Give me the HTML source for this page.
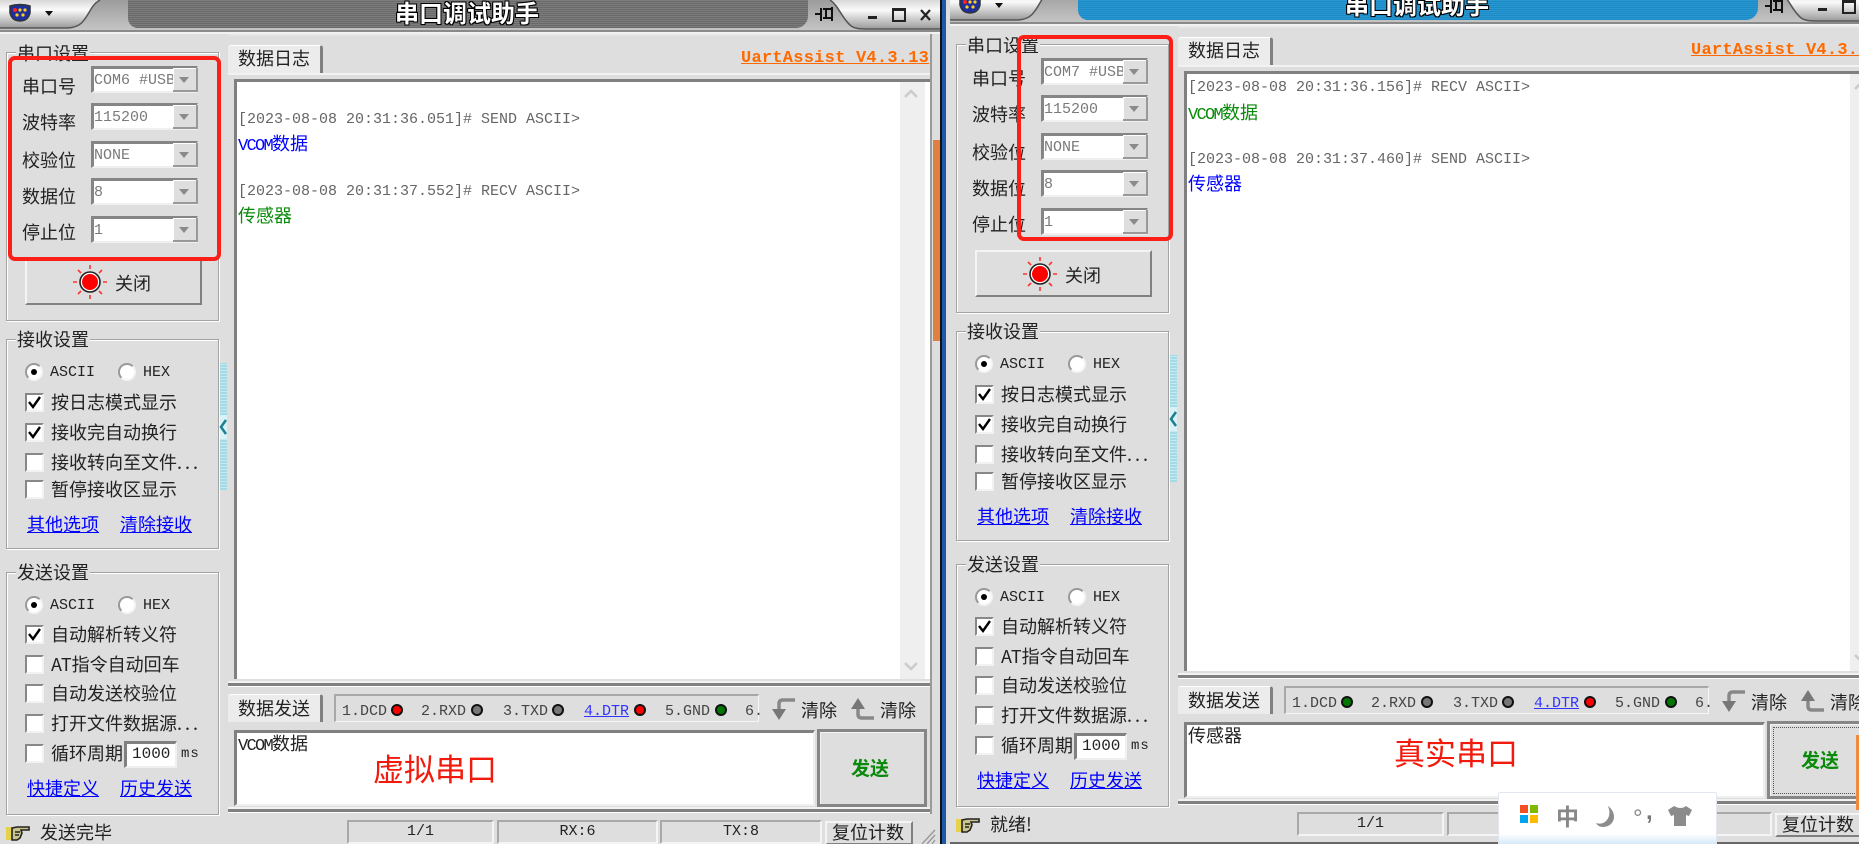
<!DOCTYPE html>
<html lang="zh">
<head>
<meta charset="utf-8">
<title>串口调试助手</title>
<style>
html,body{margin:0;padding:0;width:1859px;height:844px;overflow:hidden;background:#dedede}
#page{position:absolute;left:0;top:0;width:1859px;height:844px;overflow:hidden;filter:blur(.35px)}
.w{position:absolute;width:950px;height:852px;background:#dedede;overflow:hidden;font-family:"Liberation Mono","Noto Sans CJK SC",monospace;color:#222}
.w div,.w svg,.w a{position:absolute}
.t{white-space:nowrap;line-height:20px;font-size:18px;font-family:"Noto Sans CJK SC",sans-serif}
.t b{font-weight:normal;letter-spacing:3px}
.m{white-space:nowrap;line-height:20px;font-size:15px;font-family:"Liberation Mono","Noto Sans CJK SC",monospace}
.v{font-size:17px;letter-spacing:-1.7px}
.l{white-space:nowrap;line-height:20px;font-size:18px;font-family:"Noto Sans CJK SC",sans-serif;color:#00f;text-decoration:underline}
.strip{left:128px;top:0;width:680px;height:28px;border-radius:0 0 12px 10px;background:repeating-linear-gradient(0deg,#6a6a6a 0 1px,#7c7c7c 1px 2px)}
.ttl{left:395px;top:-1px;font:bold 24px/26px "Noto Sans CJK SC",sans-serif;color:#fff;white-space:nowrap;text-shadow:1px 0 #000,-1px 0 #000,0 1px #000,0 -1px #000,1px 1px #000,-1px -1px #000,1px -1px #000,-1px 1px #000}
.g{border:1px solid #a2a2a2;box-shadow:1px 1px 0 #fff,inset 1px 1px 0 #fff}
.lg{background:#dedede;padding:0 1px}
.c{left:91px;width:102px;height:22px;background:#fff;border:3px solid #858585;border-right-color:#e8e8e8;border-bottom-color:#f0f0f0;border-right-width:2px;border-bottom-width:2px;overflow:hidden}
.c span{position:absolute;left:0;top:2px;font:15px/20px "Liberation Mono",monospace;color:#7a7a7a;white-space:nowrap}
.b{left:173px;width:25px;height:24px;background:#dedede;border-right:2px solid #999;border-bottom:2px solid #999;box-sizing:border-box;box-shadow:inset 1px 1px 0 #fff}
.b:after{content:"";position:absolute;left:6px;top:9px;border:5px solid transparent;border-top:6px solid #8a8a8a;border-bottom:0}
.ck{left:25px;width:15px;height:15px;background:#fff;border:2px solid #888;border-right-color:#f2f2f2;border-bottom-color:#f2f2f2}
.ck svg{left:0;top:0}
.r{width:14px;height:14px;border-radius:50%;background:#fff;border:2px solid #999;border-right-color:#f4f4f4;border-bottom-color:#f4f4f4}
.r i{position:absolute;left:4px;top:4px;width:6px;height:6px;border-radius:50%;background:#000}
.tab{width:95px;height:28px;background:#ececec;border-top:1px solid #fff;border-right:3px solid #808080;border-radius:3px 3px 0 0;box-sizing:border-box}
.box{background:#fff;border-top:3px solid #808080;border-left:3px solid #808080;border-right:2px solid #f0f0f0;border-bottom:2px solid #f0f0f0;box-sizing:border-box}
.hl{height:3px;background:#808080;box-shadow:0 1px 0 #fff,0 -2px 0 #f2f2f2}
.d{width:8px;height:8px;border-radius:50%;border:2px solid #111}
.p{border:2px solid #a9a9a9;border-right-color:#f4f4f4;border-bottom-color:#f4f4f4;box-sizing:border-box;height:24px;text-align:center;font:15px/20px "Liberation Mono",monospace;color:#222}
.btn{background:#dedede;border-top:2px solid #f4f4f4;border-left:2px solid #f4f4f4;border-right:2px solid #808080;border-bottom:2px solid #808080;box-sizing:border-box}
.red{position:absolute;border:4px solid #fb1f17;border-radius:7px;box-sizing:border-box;z-index:5}
</style>
</head>
<body>
<div id="page">

<!-- LEFT WINDOW -->
<div class="w" style="left:0;top:0;width:940px">
  <svg style="left:0;top:0" width="940" height="34" viewBox="0 0 940 34">
    <defs>
      <linearGradient id="a" x1="0" y1="0" x2="0" y2="1"><stop offset="0" stop-color="#d8d8d8"/><stop offset=".35" stop-color="#fafafa"/><stop offset="1" stop-color="#9a9a9a"/></linearGradient>
      <linearGradient id="b" x1="0" y1="0" x2="0" y2="1"><stop offset="0" stop-color="#9c9c9c"/><stop offset="1" stop-color="#c4c4c4"/></linearGradient>
    </defs>
    <rect width="940" height="30" fill="url(#b)"/>
    <path d="M0 0H100C91 5 90 13 84 20C80 26 74 28 66 28H0Z" fill="url(#a)"/>
    <path d="M100 0C91 5 90 13 84 20C80 26 74 28 66 28H0" fill="none" stroke="#555" stroke-width="1.5"/>
    <path d="M830 0C838 5 842 18 850 25C854 29 860 29 870 29H940V0Z" fill="url(#a)"/>
    <path d="M830 0C838 5 842 18 850 25C854 29 860 29 870 29H940" fill="none" stroke="#555" stroke-width="1.5"/>
    <rect y="30" width="940" height="2" fill="#8a8a8a"/><rect y="32" width="940" height="2" fill="#f2f2f2"/>
    <path d="M10 6Q20 3 30 6V13Q28 21 20 21Q12 21 10 13Z" fill="#1c2f9a" stroke="#333" stroke-width="1.5"/>
    <circle cx="15" cy="10" r="2" fill="#f22"/><circle cx="20" cy="10" r="1.6" fill="#fc2"/><circle cx="25" cy="10" r="1.6" fill="#fc2"/><circle cx="17" cy="15" r="1.6" fill="#fc2"/><circle cx="23" cy="15" r="1.6" fill="#fc2"/>
    <path d="M45 11h8l-4 5z" fill="#111"/>
    <path d="M815 14h6M821 8v13M823 9h9v9h-9M832 7v14M826 9v9" fill="none" stroke="#111" stroke-width="2"/>
    <rect x="868" y="16" width="9" height="3" fill="#222"/>
    <rect x="893" y="9" width="12" height="12" fill="none" stroke="#222" stroke-width="2"/><rect x="893" y="8" width="12" height="3" fill="#222"/>
    <path d="M921 10l9 10M930 10l-9 10" stroke="#222" stroke-width="2.2"/>
  </svg>
  <div class="strip"></div>
  <div class="ttl">串口调试助手</div>

  <!-- 串口设置 -->
  <div class="g" style="left:6px;top:52px;width:211px;height:267px"></div>
  <div class="t lg" style="left:16px;top:43px">串口设置</div>
  <div class="t" style="left:22px;top:76px">串口号</div>
  <div class="t" style="left:22px;top:112px">波特率</div>
  <div class="t" style="left:22px;top:150px">校验位</div>
  <div class="t" style="left:22px;top:186px">数据位</div>
  <div class="t" style="left:22px;top:222px">停止位</div>
  <div class="c" style="top:66px"><span>COM6 #USB</span></div><div class="b" style="top:68px"></div>
  <div class="c" style="top:103px"><span>115200</span></div><div class="b" style="top:105px"></div>
  <div class="c" style="top:141px"><span>NONE</span></div><div class="b" style="top:143px"></div>
  <div class="c" style="top:178px"><span>8</span></div><div class="b" style="top:180px"></div>
  <div class="c" style="top:216px"><span>1</span></div><div class="b" style="top:218px"></div>
  <div class="btn" style="left:25px;top:258px;width:177px;height:47px"></div>
  <svg style="left:72px;top:264px" width="36" height="36" viewBox="0 0 36 36"><circle cx="18" cy="18" r="10" fill="#fff" stroke="#222" stroke-width="1.6"/><circle cx="18" cy="18" r="8" fill="#f00"/><path d="M18 1v4M18 31v4M1 18h4M31 18h4M6 6l3 3M30 6l-3 3M6 30l3-3M30 30l-3-3" stroke="#f33" stroke-width="1.6"/></svg>
  <div class="t" style="left:115px;top:273px">关闭</div>

  <!-- 接收设置 -->
  <div class="g" style="left:6px;top:339px;width:211px;height:208px"></div>
  <div class="t lg" style="left:16px;top:329px">接收设置</div>
  <div class="r" style="left:25px;top:363px"><i></i></div><div class="m" style="left:50px;top:363px">ASCII</div>
  <div class="r" style="left:118px;top:363px"></div><div class="m" style="left:143px;top:363px">HEX</div>
  <div class="ck" style="top:393px"><svg width="15" height="15"><path d="M2 7l4 5 7-10" fill="none" stroke="#000" stroke-width="2.4"/></svg></div><div class="t" style="left:51px;top:392px">按日志模式显示</div>
  <div class="ck" style="top:423px"><svg width="15" height="15"><path d="M2 7l4 5 7-10" fill="none" stroke="#000" stroke-width="2.4"/></svg></div><div class="t" style="left:51px;top:422px">接收完自动换行</div>
  <div class="ck" style="top:453px"></div><div class="t" style="left:51px;top:452px">接收转向至文件<b>...</b></div>
  <div class="ck" style="top:480px"></div><div class="t" style="left:51px;top:479px">暂停接收区显示</div>
  <a class="l" style="left:27px;top:514px">其他选项</a><a class="l" style="left:120px;top:514px">清除接收</a>

  <!-- 发送设置 -->
  <div class="g" style="left:6px;top:572px;width:211px;height:241px"></div>
  <div class="t lg" style="left:16px;top:562px">发送设置</div>
  <div class="r" style="left:25px;top:596px"><i></i></div><div class="m" style="left:50px;top:596px">ASCII</div>
  <div class="r" style="left:118px;top:596px"></div><div class="m" style="left:143px;top:596px">HEX</div>
  <div class="ck" style="top:625px"><svg width="15" height="15"><path d="M2 7l4 5 7-10" fill="none" stroke="#000" stroke-width="2.4"/></svg></div><div class="t" style="left:51px;top:624px">自动解析转义符</div>
  <div class="ck" style="top:655px"></div><div class="t" style="left:51px;top:654px">AT指令自动回车</div>
  <div class="ck" style="top:684px"></div><div class="t" style="left:51px;top:683px">自动发送校验位</div>
  <div class="ck" style="top:714px"></div><div class="t" style="left:51px;top:713px">打开文件数据源<b>...</b></div>
  <div class="ck" style="top:744px"></div><div class="t" style="left:51px;top:743px">循环周期</div>
  <div class="box" style="left:124px;top:741px;width:53px;height:27px"></div><div class="m" style="left:132px;top:744px;font-size:16px">1000</div><div class="m" style="left:181px;top:744px;font-size:14px;letter-spacing:1px">ms</div>
  <a class="l" style="left:27px;top:778px">快捷定义</a><a class="l" style="left:120px;top:778px">历史发送</a>

  <!-- sash -->
  <div style="left:220px;top:363px;width:7px;height:127px;background:repeating-linear-gradient(0deg,#a4d9e6 0 2px,#c6e9f1 2px 3px)"></div>
  <div style="left:220px;top:415px;width:7px;height:24px;background:#d8f2f8"></div>
  <svg style="left:219px;top:417px" width="9" height="20"><path d="M7 3L2 10l5 7" fill="none" stroke="#1f7f90" stroke-width="2.5"/></svg>

  <!-- right chrome -->
  <div style="left:228px;top:34px;width:704px;height:2px;background:#e6e6e6"></div>
  <div style="left:930px;top:34px;width:2px;height:780px;background:#9a9a9a"></div>
  <div style="left:933px;top:140px;width:7px;height:201px;background:#e08040"></div>

  <!-- log -->
  <div class="tab" style="left:228px;top:45px"></div>
  <div class="t" style="left:238px;top:48px">数据日志</div>
  <div class="m" style="left:741px;top:49px;font-size:17px;font-weight:bold;color:#ff6a00;text-decoration:underline;letter-spacing:.25px">UartAssist V4.3.13</div>
  <div style="left:228px;top:73px;width:702px;height:2px;background:#f2f2f2"></div>
  <div style="left:234px;top:79px;width:696px;height:600px;background:#fff;border-top:3px solid #808080;border-left:3px solid #808080;box-sizing:border-box"></div>
  <div style="left:900px;top:82px;width:25px;height:597px;background:#efefef"></div>
  <svg style="left:903px;top:88px" width="16" height="12"><path d="M2 9l6-6 6 6" fill="none" stroke="#ccc" stroke-width="2.6"/></svg>
  <svg style="left:903px;top:660px" width="16" height="12"><path d="M2 3l6 6 6-6" fill="none" stroke="#ccc" stroke-width="2.6"/></svg>
  <div class="m" style="left:238px;top:110px;color:#666">[2023-08-08 20:31:36.051]# SEND ASCII&gt;</div>
  <div class="m" style="left:238px;top:133px;color:#00f"><span class="v">VCOM</span><span style="font-size:18px;font-family:'Noto Sans CJK SC',sans-serif">数据</span></div>
  <div class="m" style="left:238px;top:182px;color:#666">[2023-08-08 20:31:37.552]# RECV ASCII&gt;</div>
  <div class="t" style="left:238px;top:205px;color:#0a8a0a">传感器</div>

  <!-- send -->
  <div class="hl" style="left:228px;top:683px;width:702px"></div>
  <div class="tab" style="left:228px;top:694px"></div>
  <div class="t" style="left:238px;top:698px">数据发送</div>
  <div style="left:334px;top:694px;width:425px;height:28px;border-top:2px solid #a8a8a8;border-left:2px solid #a8a8a8;border-right:1px solid #f6f6f6;border-bottom:1px solid #f6f6f6;box-sizing:border-box"></div>
  <div class="m" style="left:342px;top:702px;color:#444">1.DCD</div><div class="d" style="left:391px;top:704px;background:#f00"></div>
  <div class="m" style="left:421px;top:702px;color:#444">2.RXD</div><div class="d" style="left:471px;top:704px;background:#777"></div>
  <div class="m" style="left:503px;top:702px;color:#444">3.TXD</div><div class="d" style="left:552px;top:704px;background:#777"></div>
  <div class="m" style="left:584px;top:702px;color:#33f;text-decoration:underline">4.DTR</div><div class="d" style="left:634px;top:704px;background:#f00"></div>
  <div class="m" style="left:665px;top:702px;color:#444">5.GND</div><div class="d" style="left:715px;top:704px;background:#070"></div>
  <div class="m" style="left:745px;top:702px;color:#444">6.</div>
  <svg style="left:770px;top:696px" width="28" height="26"><path d="M25 4H13Q9 4 9 8V16" fill="none" stroke="#888" stroke-width="3.5"/><path d="M2 13h14l-7 11z" fill="#777"/></svg>
  <div class="t" style="left:801px;top:700px">清除</div>
  <svg style="left:849px;top:696px" width="28" height="26"><path d="M25 22H13Q9 22 9 18V10" fill="none" stroke="#888" stroke-width="3.5"/><path d="M2 13h14L9 2z" fill="#777"/></svg>
  <div class="t" style="left:880px;top:700px">清除</div>
  <div class="box" style="left:234px;top:730px;width:581px;height:76px"></div>
  <div class="m" style="left:238px;top:733px"><span class="v">VCOM</span><span style="font-size:18px;font-family:'Noto Sans CJK SC',sans-serif">数据</span></div>
  <div style="left:373px;top:750px;font:31px/36px 'Noto Sans CJK SC',sans-serif;color:#f21a0c;white-space:nowrap">虚拟串口</div>
  <div class="btn" style="left:817px;top:729px;width:110px;height:78px;border:3px solid #868686;box-shadow:inset 1px 1px 0 #f4f4f4"></div>
  <div class="t" style="left:851px;top:758px;color:#0a8a0a;font-weight:bold;font-size:19px">发送</div>
  <div class="hl" style="left:228px;top:809px;width:702px"></div>

  <!-- status -->
  <svg style="left:5px;top:823px" width="25" height="18"><path d="M1 4h6v13H1z" fill="#e6d24a"/><path d="M7 5l5-1 12 0v3h-8l1 3-2 5-3 2H7z" fill="#c9c58a" stroke="#222" stroke-width="1.6"/><path d="M10 9h5M10 12h4" stroke="#222" stroke-width="1.4"/></svg>
  <div class="t" style="left:40px;top:822px">发送完毕</div>
  <div class="p" style="left:347px;top:820px;width:147px">1/1</div>
  <div class="p" style="left:497px;top:820px;width:161px">RX:6</div>
  <div class="p" style="left:660px;top:820px;width:162px">TX:8</div>
  <div class="btn" style="left:825px;top:821px;width:88px;height:24px"></div>
  <div class="t" style="left:832px;top:822px">复位计数</div>
  <svg style="left:920px;top:826px" width="16" height="18"><path d="M2 18L15 4M7 18L15 9M12 18l3-4" stroke="#999" stroke-width="1.4"/></svg>
</div>

<!-- DIVIDER -->
<div style="position:absolute;left:940px;top:0;width:2px;height:844px;background:#111"></div>
<div style="position:absolute;left:942px;top:0;width:4px;height:844px;background:#1c5aa8"></div>

<!-- RIGHT WINDOW -->
<div class="w" style="left:950px;top:-8px;width:909px;background:#dedede">
  <svg style="left:0;top:0" width="940" height="34" viewBox="0 0 940 34">
    <defs>
      <linearGradient id="a2" x1="0" y1="0" x2="0" y2="1"><stop offset="0" stop-color="#d8d8d8"/><stop offset=".35" stop-color="#fafafa"/><stop offset="1" stop-color="#9a9a9a"/></linearGradient>
      <linearGradient id="b2" x1="0" y1="0" x2="0" y2="1"><stop offset="0" stop-color="#9c9c9c"/><stop offset="1" stop-color="#c4c4c4"/></linearGradient>
    </defs>
    <rect width="940" height="30" fill="url(#b2)"/>
    <path d="M0 0H100C91 5 90 13 84 20C80 26 74 28 66 28H0Z" fill="url(#a2)"/>
    <path d="M100 0C91 5 90 13 84 20C80 26 74 28 66 28H0" fill="none" stroke="#555" stroke-width="1.5"/>
    <path d="M830 0C838 5 842 18 850 25C854 29 860 29 870 29H940V0Z" fill="url(#a2)"/>
    <path d="M830 0C838 5 842 18 850 25C854 29 860 29 870 29H940" fill="none" stroke="#555" stroke-width="1.5"/>
    <rect y="30" width="940" height="2" fill="#8a8a8a"/><rect y="32" width="940" height="2" fill="#f2f2f2"/>
    <path d="M10 6Q20 3 30 6V13Q28 21 20 21Q12 21 10 13Z" fill="#1c2f9a" stroke="#333" stroke-width="1.5"/>
    <circle cx="15" cy="10" r="2" fill="#f22"/><circle cx="20" cy="10" r="1.6" fill="#fc2"/><circle cx="25" cy="10" r="1.6" fill="#fc2"/><circle cx="17" cy="15" r="1.6" fill="#fc2"/><circle cx="23" cy="15" r="1.6" fill="#fc2"/>
    <path d="M45 11h8l-4 5z" fill="#111"/>
    <path d="M815 14h6M821 8v13M823 9h9v9h-9M832 7v14M826 9v9" fill="none" stroke="#111" stroke-width="2"/>
    <rect x="868" y="16" width="9" height="3" fill="#222"/>
    <rect x="893" y="9" width="12" height="12" fill="none" stroke="#222" stroke-width="2"/><rect x="893" y="8" width="12" height="3" fill="#222"/>
  </svg>
  <div class="strip" style="background:repeating-linear-gradient(0deg,#1b8ac6 0 1px,#2a98d0 1px 2px)"></div>
  <div class="ttl">串口调试助手</div>

  <div class="g" style="left:6px;top:52px;width:211px;height:267px"></div>
  <div class="t lg" style="left:16px;top:43px">串口设置</div>
  <div class="t" style="left:22px;top:76px">串口号</div>
  <div class="t" style="left:22px;top:112px">波特率</div>
  <div class="t" style="left:22px;top:150px">校验位</div>
  <div class="t" style="left:22px;top:186px">数据位</div>
  <div class="t" style="left:22px;top:222px">停止位</div>
  <div class="c" style="top:66px"><span>COM7 #USB</span></div><div class="b" style="top:68px"></div>
  <div class="c" style="top:103px"><span>115200</span></div><div class="b" style="top:105px"></div>
  <div class="c" style="top:141px"><span>NONE</span></div><div class="b" style="top:143px"></div>
  <div class="c" style="top:178px"><span>8</span></div><div class="b" style="top:180px"></div>
  <div class="c" style="top:216px"><span>1</span></div><div class="b" style="top:218px"></div>
  <div class="btn" style="left:25px;top:258px;width:177px;height:47px"></div>
  <svg style="left:72px;top:264px" width="36" height="36" viewBox="0 0 36 36"><circle cx="18" cy="18" r="10" fill="#fff" stroke="#222" stroke-width="1.6"/><circle cx="18" cy="18" r="8" fill="#f00"/><path d="M18 1v4M18 31v4M1 18h4M31 18h4M6 6l3 3M30 6l-3 3M6 30l3-3M30 30l-3-3" stroke="#f33" stroke-width="1.6"/></svg>
  <div class="t" style="left:115px;top:273px">关闭</div>

  <div class="g" style="left:6px;top:339px;width:211px;height:208px"></div>
  <div class="t lg" style="left:16px;top:329px">接收设置</div>
  <div class="r" style="left:25px;top:363px"><i></i></div><div class="m" style="left:50px;top:363px">ASCII</div>
  <div class="r" style="left:118px;top:363px"></div><div class="m" style="left:143px;top:363px">HEX</div>
  <div class="ck" style="top:393px"><svg width="15" height="15"><path d="M2 7l4 5 7-10" fill="none" stroke="#000" stroke-width="2.4"/></svg></div><div class="t" style="left:51px;top:392px">按日志模式显示</div>
  <div class="ck" style="top:423px"><svg width="15" height="15"><path d="M2 7l4 5 7-10" fill="none" stroke="#000" stroke-width="2.4"/></svg></div><div class="t" style="left:51px;top:422px">接收完自动换行</div>
  <div class="ck" style="top:453px"></div><div class="t" style="left:51px;top:452px">接收转向至文件<b>...</b></div>
  <div class="ck" style="top:480px"></div><div class="t" style="left:51px;top:479px">暂停接收区显示</div>
  <a class="l" style="left:27px;top:514px">其他选项</a><a class="l" style="left:120px;top:514px">清除接收</a>

  <div class="g" style="left:6px;top:572px;width:211px;height:241px"></div>
  <div class="t lg" style="left:16px;top:562px">发送设置</div>
  <div class="r" style="left:25px;top:596px"><i></i></div><div class="m" style="left:50px;top:596px">ASCII</div>
  <div class="r" style="left:118px;top:596px"></div><div class="m" style="left:143px;top:596px">HEX</div>
  <div class="ck" style="top:625px"><svg width="15" height="15"><path d="M2 7l4 5 7-10" fill="none" stroke="#000" stroke-width="2.4"/></svg></div><div class="t" style="left:51px;top:624px">自动解析转义符</div>
  <div class="ck" style="top:655px"></div><div class="t" style="left:51px;top:654px">AT指令自动回车</div>
  <div class="ck" style="top:684px"></div><div class="t" style="left:51px;top:683px">自动发送校验位</div>
  <div class="ck" style="top:714px"></div><div class="t" style="left:51px;top:713px">打开文件数据源<b>...</b></div>
  <div class="ck" style="top:744px"></div><div class="t" style="left:51px;top:743px">循环周期</div>
  <div class="box" style="left:124px;top:741px;width:53px;height:27px"></div><div class="m" style="left:132px;top:744px;font-size:16px">1000</div><div class="m" style="left:181px;top:744px;font-size:14px;letter-spacing:1px">ms</div>
  <a class="l" style="left:27px;top:778px">快捷定义</a><a class="l" style="left:120px;top:778px">历史发送</a>

  <div style="left:220px;top:363px;width:7px;height:127px;background:repeating-linear-gradient(0deg,#a4d9e6 0 2px,#c6e9f1 2px 3px)"></div>
  <div style="left:220px;top:415px;width:7px;height:24px;background:#d8f2f8"></div>
  <svg style="left:219px;top:417px" width="9" height="20"><path d="M7 3L2 10l5 7" fill="none" stroke="#1f7f90" stroke-width="2.5"/></svg>

  <div style="left:228px;top:34px;width:704px;height:2px;background:#e6e6e6"></div>

  <div class="tab" style="left:228px;top:45px"></div>
  <div class="t" style="left:238px;top:48px">数据日志</div>
  <div class="m" style="left:741px;top:49px;font-size:17px;font-weight:bold;color:#ff6a00;text-decoration:underline;letter-spacing:.25px">UartAssist V4.3.13</div>
  <div style="left:228px;top:73px;width:702px;height:2px;background:#f2f2f2"></div>
  <div style="left:234px;top:79px;width:696px;height:600px;background:#fff;border-top:3px solid #808080;border-left:3px solid #808080;box-sizing:border-box"></div>
  <div style="left:900px;top:82px;width:25px;height:597px;background:#efefef"></div>
  <svg style="left:903px;top:88px" width="16" height="12"><path d="M2 9l6-6 6 6" fill="none" stroke="#ccc" stroke-width="2.6"/></svg>
  <svg style="left:903px;top:660px" width="16" height="12"><path d="M2 3l6 6 6-6" fill="none" stroke="#ccc" stroke-width="2.6"/></svg>
  <div class="m" style="left:238px;top:86px;color:#666">[2023-08-08 20:31:36.156]# RECV ASCII&gt;</div>
  <div class="m" style="left:238px;top:110px;color:#0a8a0a"><span class="v">VCOM</span><span style="font-size:18px;font-family:'Noto Sans CJK SC',sans-serif">数据</span></div>
  <div class="m" style="left:238px;top:158px;color:#666">[2023-08-08 20:31:37.460]# SEND ASCII&gt;</div>
  <div class="t" style="left:238px;top:181px;color:#00f">传感器</div>

  <div class="hl" style="left:228px;top:683px;width:702px"></div>
  <div class="tab" style="left:228px;top:694px"></div>
  <div class="t" style="left:238px;top:698px">数据发送</div>
  <div style="left:334px;top:694px;width:425px;height:28px;border-top:2px solid #a8a8a8;border-left:2px solid #a8a8a8;border-right:1px solid #f6f6f6;border-bottom:1px solid #f6f6f6;box-sizing:border-box"></div>
  <div class="m" style="left:342px;top:702px;color:#444">1.DCD</div><div class="d" style="left:391px;top:704px;background:#070"></div>
  <div class="m" style="left:421px;top:702px;color:#444">2.RXD</div><div class="d" style="left:471px;top:704px;background:#777"></div>
  <div class="m" style="left:503px;top:702px;color:#444">3.TXD</div><div class="d" style="left:552px;top:704px;background:#777"></div>
  <div class="m" style="left:584px;top:702px;color:#33f;text-decoration:underline">4.DTR</div><div class="d" style="left:634px;top:704px;background:#f00"></div>
  <div class="m" style="left:665px;top:702px;color:#444">5.GND</div><div class="d" style="left:715px;top:704px;background:#070"></div>
  <div class="m" style="left:745px;top:702px;color:#444">6.</div>
  <svg style="left:770px;top:696px" width="28" height="26"><path d="M25 4H13Q9 4 9 8V16" fill="none" stroke="#888" stroke-width="3.5"/><path d="M2 13h14l-7 11z" fill="#777"/></svg>
  <div class="t" style="left:801px;top:700px">清除</div>
  <svg style="left:849px;top:696px" width="28" height="26"><path d="M25 22H13Q9 22 9 18V10" fill="none" stroke="#888" stroke-width="3.5"/><path d="M2 13h14L9 2z" fill="#777"/></svg>
  <div class="t" style="left:880px;top:700px">清除</div>
  <div class="box" style="left:234px;top:730px;width:581px;height:76px"></div>
  <div class="t" style="left:238px;top:733px">传感器</div>
  <div style="left:444px;top:742px;font:31px/36px 'Noto Sans CJK SC',sans-serif;color:#f21a0c;white-space:nowrap">真实串口</div>
  <div class="btn" style="left:817px;top:729px;width:110px;height:78px;border:3px solid #868686;box-shadow:inset 1px 1px 0 #f4f4f4"></div>
  <div style="left:823px;top:735px;width:98px;height:65px;border:1px dotted #555"></div>
  <div class="t" style="left:851px;top:758px;color:#0a8a0a;font-weight:bold;font-size:19px">发送</div>
  <div class="hl" style="left:228px;top:809px;width:702px"></div>

  <svg style="left:5px;top:823px" width="25" height="18"><path d="M1 4h6v13H1z" fill="#e6d24a"/><path d="M7 5l5-1 12 0v3h-8l1 3-2 5-3 2H7z" fill="#c9c58a" stroke="#222" stroke-width="1.6"/><path d="M10 9h5M10 12h4" stroke="#222" stroke-width="1.4"/></svg>
  <div class="t" style="left:40px;top:822px">就绪!</div>
  <div class="p" style="left:347px;top:820px;width:147px">1/1</div>
  <div class="p" style="left:497px;top:820px;width:161px">RX:6</div>
  <div class="p" style="left:660px;top:820px;width:162px">TX:8</div>
  <div class="btn" style="left:825px;top:821px;width:88px;height:24px"></div>
  <div class="t" style="left:832px;top:822px">复位计数</div>
  <div style="left:0;top:850px;width:940px;height:2px;background:#666"></div>
</div>
<div style="position:absolute;left:946px;top:0;width:4px;height:844px;background:#dedede"></div>

<!-- orange strip on the far right -->
<div style="position:absolute;left:1856px;top:735px;width:3px;height:75px;background:#f08a3c"></div>

<!-- red annotation rectangles -->
<div class="red" style="left:8px;top:56px;width:213px;height:205px"></div>
<div class="red" style="left:1017px;top:35px;width:156px;height:206px"></div>

<!-- IME toolbar -->
<div style="position:absolute;left:1498px;top:792px;width:219px;height:52px;background:linear-gradient(#fff 0,#fff 80%,#d6e8fa 100%);border:1px solid #e3e8f0;border-bottom:0;box-sizing:border-box;border-radius:2px 2px 0 0">
  <div style="position:absolute;left:21px;top:12px;width:8px;height:8px;background:#f25022"></div>
  <div style="position:absolute;left:31px;top:12px;width:8px;height:8px;background:#7fba00"></div>
  <div style="position:absolute;left:21px;top:22px;width:8px;height:8px;background:#00a4ef"></div>
  <div style="position:absolute;left:31px;top:22px;width:8px;height:8px;background:#ffb900"></div>
  <div style="position:absolute;left:57px;top:8px;font:bold 23px/28px 'Noto Sans CJK SC',sans-serif;color:#888">中</div>
  <svg style="position:absolute;left:95px;top:11px" width="24" height="24"><path d="M14 2C22 8 22 18 14 22C9 24 4 23 2 19C8 21 13 18 15 12C16 8 15 5 14 2Z" fill="#8c8c8c"/></svg>
  <div style="position:absolute;left:134px;top:14px;font:24px/24px 'Liberation Sans',sans-serif;color:#888">°</div>
  <div style="position:absolute;left:147px;top:7px;font:bold 24px/24px 'Liberation Sans',sans-serif;color:#777">,</div>
  <svg style="position:absolute;left:168px;top:12px" width="26" height="22"><path d="M7 1L1 5l3 6 3-1v11h12V10l3 1 3-6-6-4q-5 4-12 0z" fill="#8c8c8c"/></svg>
</div>

</div>
</body>
</html>
